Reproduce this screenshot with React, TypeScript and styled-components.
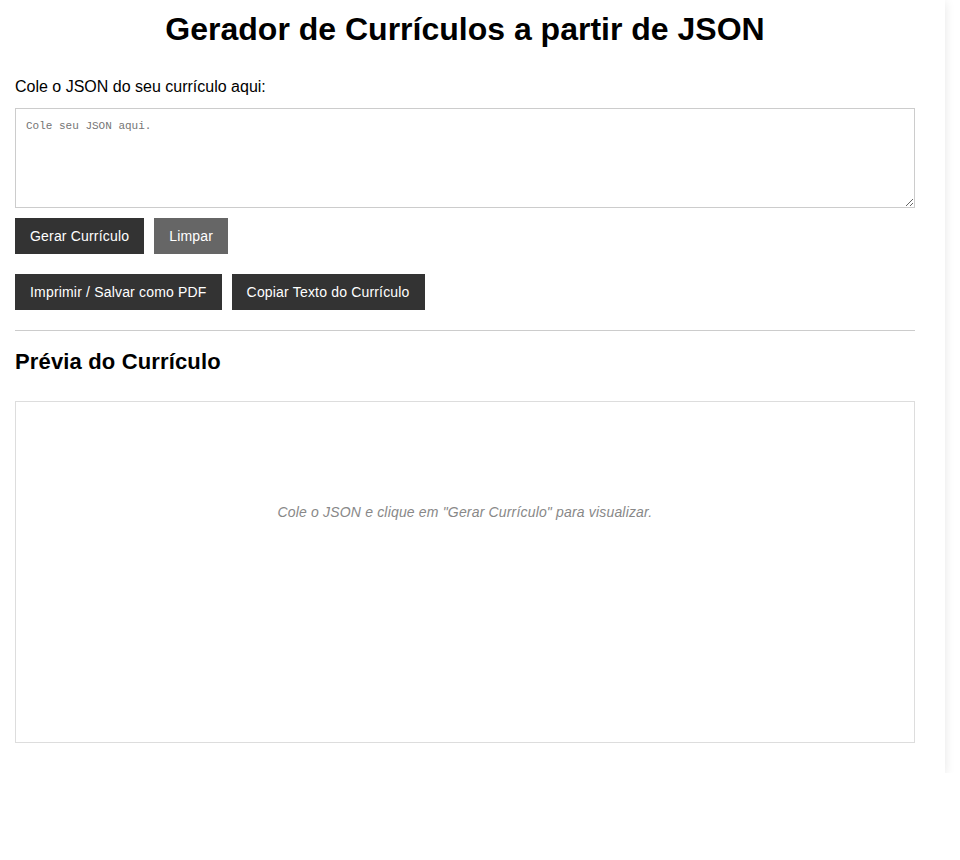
import React from "react";
import styled, { createGlobalStyle } from "styled-components";

const GlobalStyle = createGlobalStyle`
  html, body {
    margin: 0;
    padding: 0;
    background: #ffffff;
    font-family: "Liberation Sans", Arial, sans-serif;
    color: #000;
  }
  * { box-sizing: border-box; }
`;

const Container = styled.div`
  width: 945px;
  padding: 11px 30px 30px 15px;
  background: #fff;
  box-shadow: 0 2px 10px rgba(0, 0, 0, 0.1);
`;

const Title = styled.h1`
  margin: 0 0 30px;
  font-size: 32px;
  font-weight: bold;
  text-align: center;
  line-height: 37px;
`;

const Label = styled.label`
  display: block;
  font-size: 16px;
  line-height: 18px;
  margin-bottom: 12px;
`;

const JsonInput = styled.textarea`
  display: block;
  width: 100%;
  height: 100px;
  padding: 11px 10px 10px;
  border: 1px solid #ccc;
  font-family: "Liberation Mono", "DejaVu Sans Mono", monospace;
  font-size: 11px;
  color: #333;
  resize: vertical;
  outline: none;
  &::placeholder {
    color: #757575;
  }
`;

const ButtonRow = styled.div<{ $top: number }>`
  display: flex;
  gap: 10px;
  margin-top: ${(p) => p.$top}px;
`;

const Button = styled.button<{ $variant?: "primary" | "secondary" }>`
  height: 36px;
  padding: 0 15px;
  border: none;
  background: ${(p) => (p.$variant === "secondary" ? "#666666" : "#333333")};
  color: #fff;
  font-family: "Liberation Sans", Arial, sans-serif;
  font-size: 14px;
  letter-spacing: 0.18px;
  cursor: pointer;
`;

const Divider = styled.hr`
  margin: 20px 0 0;
  border: none;
  border-top: 1px solid #cccccc;
`;

const SectionTitle = styled.h2`
  margin: 18px 0 0;
  font-size: 22px;
  line-height: 25px;
  font-weight: bold;
  letter-spacing: 0.15px;
`;

const Preview = styled.div`
  margin-top: 27px;
  min-height: 342px;
  border: 1px solid #dddddd;
  padding: 20px;
`;

const Placeholder = styled.p`
  margin: 0;
  padding-top: 82px;
  text-align: center;
  font-style: italic;
  font-size: 14px;
  line-height: 16px;
  letter-spacing: 0.17px;
  color: #888888;
`;

export default function App() {
  return (
    <>
      <GlobalStyle />
      <Container>
        <Title>Gerador de Currículos a partir de JSON</Title>
        <Label htmlFor="json">Cole o JSON do seu currículo aqui:</Label>
        <JsonInput id="json" placeholder="Cole seu JSON aqui." />
        <ButtonRow $top={10}>
          <Button>Gerar Currículo</Button>
          <Button $variant="secondary">Limpar</Button>
        </ButtonRow>
        <ButtonRow $top={20}>
          <Button>Imprimir / Salvar como PDF</Button>
          <Button>Copiar Texto do Currículo</Button>
        </ButtonRow>
        <Divider />
        <SectionTitle>Prévia do Currículo</SectionTitle>
        <Preview>
          <Placeholder>
            Cole o JSON e clique em "Gerar Currículo" para visualizar.
          </Placeholder>
        </Preview>
      </Container>
    </>
  );
}
